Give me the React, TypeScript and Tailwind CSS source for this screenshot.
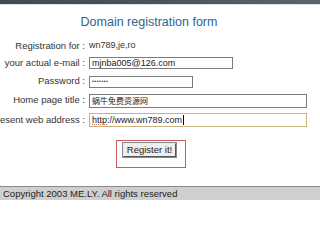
import React from 'react'

const rows = [
  { label: 'your actual e-mail :', h: 'h-[18px]', box: 'w-[144px] h-[12px] border border-[#7b7b7b]', text: 'mjnba005@126.com' },
]

function Field({ label, className, children }: { label: string; className: string; children: React.ReactNode }) {
  return (
    <div className={`flex items-center ${className}`}>
      <div className="flex w-[85px] shrink-0 justify-end">
        <span className="whitespace-nowrap text-[9.5px] text-[#333]">{label}</span>
      </div>
      <div className="ml-[4px] flex items-center">{children}</div>
    </div>
  )
}

export default function App() {
  return (
    <div className="flex h-[200px] w-[320px] flex-col overflow-hidden bg-white" style={{ fontFamily: '"Liberation Sans", Arial, sans-serif' }}>
      <div className="h-[4px] shrink-0 bg-gradient-to-r from-[#44494e] via-[#4d5257] to-[#5d6368]" />
      <div className="h-px shrink-0 bg-[#dfe5ea]" />

      <div className="w-[298px] pt-[9px] text-center text-[12.5px] leading-[16px] text-[#2d6492]">
        Domain registration form
      </div>

      <div className="mt-[8px] flex flex-col">
        <Field label="Registration for :" className="h-[16px]">
          <span className="text-[9px] text-[#333]">wn789,je,ro</span>
        </Field>
        {rows.map((r) => (
          <Field key={r.label} label={r.label} className={r.h}>
            <div className={`flex items-center bg-white px-[2px] text-[9px] leading-none text-[#222] ${r.box}`}>{r.text}</div>
          </Field>
        ))}
        <Field label="Password :" className="h-[19px]">
          <div className="flex h-[12px] w-[104px] items-center border border-[#7b7b7b] bg-white px-[2px] text-[5px] leading-none tracking-[0.6px] text-[#222]">
            •••••••
          </div>
        </Field>
        <Field label="Home page title :" className="h-[19px]">
          <div
            className="flex h-[14px] w-[218px] items-center border border-[#7b7b7b] bg-white px-[2px] text-[8px] leading-none text-[#222]"
            style={{ fontFamily: '"Noto Sans CJK SC", sans-serif' }}
          >
            蜗牛免费资源网
          </div>
        </Field>
        <Field label="Present web address :" className="h-[20px]">
          <div className="flex h-[14px] w-[218px] items-center border-[1.5px] border-[#c9b27c] bg-white px-[2px] text-[9px] leading-none text-[#222]">
            <span className="underline decoration-dotted decoration-[#d07070]">http</span>
            <span>://www.wn789.com</span>
            <span className="ml-px h-[10px] w-px bg-black" />
          </div>
        </Field>
      </div>

      <div className="ml-[116px] mt-[10px] h-[28px] w-[70px] shrink-0 border border-[#cc5a5a] pl-[6px] pt-[2px]">
        <button className="flex h-[14px] w-[53px] items-center justify-center border border-t-[#e8e8e8] border-l-[#e8e8e8] border-b-[#555] border-r-[#555] bg-[#efefef] text-[9.5px] leading-none text-[#222] outline outline-1 outline-[#8a8a8a]">
          Register it!
        </button>
      </div>

      <div className="mt-[18px] flex flex-1 items-center border-t border-[#8a8a8a] bg-[#cfcfcf] pl-[3px] text-[9.5px] leading-none text-[#222]">
        Copyright 2003 ME.LY. All rights reserved
      </div>
    </div>
  )
}
